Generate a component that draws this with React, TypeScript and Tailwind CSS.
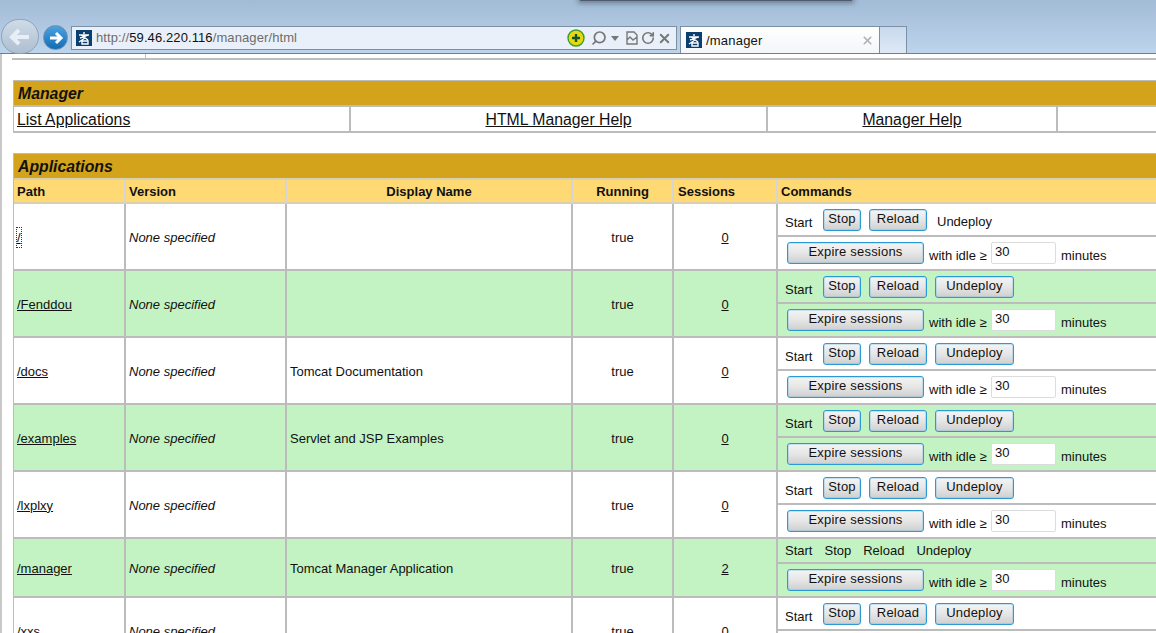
import React from 'react';
import { RotateCw, X, Search } from 'lucide-react';

interface AppRow {
  path: string;
  display: string;
  sessions: string;
  green?: boolean;
  running?: boolean;
  self?: boolean;
}

const rows: AppRow[] = [
  { path: '/', display: '', sessions: '0', running: true },
  { path: '/Fenddou', display: '', sessions: '0', green: true },
  { path: '/docs', display: 'Tomcat Documentation', sessions: '0' },
  { path: '/examples', display: 'Servlet and JSP Examples', sessions: '0', green: true },
  { path: '/lxplxy', display: '', sessions: '0' },
  { path: '/manager', display: 'Tomcat Manager Application', sessions: '2', green: true, self: true },
  { path: '/xxs', display: '', sessions: '0' },
];

const cols = 'grid grid-cols-[110px_161px_286px_101px_104px_1fr]';

function Favicon() {
  return (
    <svg width="16" height="16" viewBox="0 0 16 16" className="shrink-0">
      <rect width="16" height="16" fill="#0b3f6f" />
      <path d="M8 2v2M3 5h10M4 8l8-3M5 5l7 5M3 12l6-4M6 11h6v3H6z" stroke="#fff" strokeWidth="1.4" fill="none" />
    </svg>
  );
}

function Btn({ label, w }: { label: string; w: string }) {
  return (
    <button className={`${w} h-[22px] shrink-0 rounded-[3px] border border-[#2a9ad6] bg-gradient-to-b from-[#f4f4f4] via-[#e6e6e6] to-[#cfcfcf] pb-[3px] text-center text-[13px] leading-[18px] tracking-[0.2px] text-[#111] shadow-[inset_0_0_0_1px_rgba(120,190,230,0.35)]`}>
      {label}
    </button>
  );
}

function Commands({ row }: { row: AppRow }) {
  return (
    <div className="flex flex-col">
      {row.self ? (
        <div className="flex h-[23px] items-center gap-[12px] pl-[7px] pt-px">
          <span>Start</span>
          <span>Stop</span>
          <span>Reload</span>
          <span>Undeploy</span>
        </div>
      ) : (
        <div className="flex h-[31px] items-start pl-[7px] pt-[5px]">
          <span className="mt-[4px] w-[38px]">Start</span>
          <Btn label="Stop" w="w-[38px]" />
          <div className="ml-[8px]">
            <Btn label="Reload" w="w-[58px]" />
          </div>
          {row.running ? (
            <span className="ml-[10px] mt-[3px]">Undeploy</span>
          ) : (
            <div className="ml-[8px]">
              <Btn label="Undeploy" w="w-[79px]" />
            </div>
          )}
        </div>
      )}
      <div className="flex h-[34px] items-start border-t-2 border-[#bcbcbc] pl-[9px] pt-[5px]">
        <Btn label="Expire sessions" w="w-[137px]" />
        <span className="ml-[5px] mt-[4px] w-[62px] whitespace-nowrap">with idle ≥</span>
        <div className="h-[22px] w-[65px] rounded-[2px] border border-[#dcdcdc] bg-white pl-[3px] text-[13px] leading-[18px]">30</div>
        <span className="ml-[5px] mt-[4px]">minutes</span>
      </div>
    </div>
  );
}

export default function App() {
  return (
    <div className="h-[633px] w-[1156px] overflow-hidden bg-white font-['Liberation_Sans',Arial,sans-serif] text-[13px] text-[#111]">
      <div className="relative h-[54px] border-b border-[#6f7f90] bg-gradient-to-b from-[#a2bbd6] to-[#bdd4ec]">
        <div className="absolute left-[580px] top-0 h-[1px] w-[272px] bg-[#4f5a6b] shadow-[0_0_5px_2px_rgba(60,70,90,0.6)]" />
        <div className="absolute left-[1px] top-[19px] flex h-[35px] w-[38px] items-center justify-center rounded-full border border-[#8fa3b8] bg-gradient-to-b from-[#cfdbe8] to-[#aebfd1]">
          <svg width="24" height="20" viewBox="0 0 24 20">
            <path d="M21 10H5M11 3l-7 7 7 7" stroke="#e8eef5" strokeWidth="4" fill="none" />
          </svg>
        </div>
        <div className="absolute left-[43px] top-[25px] flex h-[25px] w-[25px] items-center justify-center rounded-full border border-[#6d8fae] bg-gradient-to-b from-[#4aa3e0] to-[#0f6db5]">
          <svg width="16" height="14" viewBox="0 0 16 14">
            <path d="M2 7h11M8 2l5 5-5 5" stroke="#fff" strokeWidth="3" fill="none" />
          </svg>
        </div>
        <div className="absolute left-[71px] top-[26px] flex h-[24px] w-[606px] items-center border border-[#7d8fa3] bg-[#e9f0f9] pl-[4px] pr-[4px]">
          <Favicon />
          <span className="ml-[4px] text-[13px] tracking-[0.1px] text-[#6d6d6d]">
            http://<span className="text-[#111]">59.46.220.116</span>/manager/html
          </span>
          <div className="ml-auto flex items-center">
            <svg width="18" height="18" viewBox="0 0 18 18">
              <circle cx="9" cy="9" r="8" fill="#e6d90f" stroke="#3f9b2b" strokeWidth="1.4" />
              <path d="M9 5v8M5 9h8" stroke="#14532d" strokeWidth="2.4" />
            </svg>
            <Search size={16} strokeWidth={2.6} className="ml-[6px] -scale-x-100 text-[#777]" />
            <svg width="8" height="5" viewBox="0 0 8 5" className="ml-[4px]">
              <path d="M0 0h8L4 5z" fill="#777" />
            </svg>
            <svg width="12" height="14" viewBox="0 0 12 14" className="ml-[7px]">
              <path d="M1 1h7l3 3v9H1zM1 9l3-3 3 3 4-3" stroke="#777" strokeWidth="1.4" fill="none" />
            </svg>
            <RotateCw size={14} strokeWidth={2.8} className="ml-[3px] text-[#777]" />
            <X size={15} strokeWidth={3} className="ml-[2px] text-[#777]" />
          </div>
        </div>
        <div className="absolute left-[680px] top-[26px] flex h-[27px] w-[200px] items-center border border-b-0 border-[#7d8fa3] bg-gradient-to-b from-white to-[#f3f6fa] pl-[5px] pr-[5px]">
          <Favicon />
          <span className="ml-[4px] mt-[2px] text-[13px] tracking-[0.2px] text-[#111]">/manager</span>
          <X size={13} strokeWidth={3} className="ml-auto text-[#aab0b6]" />
        </div>
        <div className="absolute left-[880px] top-[26px] h-[27px] w-[27px] border border-b-0 border-l-0 border-[#7d8fa3] bg-gradient-to-b from-[#c7d9ee] to-[#dfe9f5]" />
      </div>

      <div className="h-[579px] overflow-hidden border-l-2 border-[#c8c8c8]">
        <div className="ml-[10px] flex h-[6px] border-b-2 border-[#bdbdbd]">
          <div className="h-full w-[134px] border-r border-[#bdbdbd]" />
        </div>

        <div className="ml-[11px] mt-[20px] border-l border-t border-[#bcbcbc]">
          <div className="h-[24px] bg-[#d2a31b] pl-[4px] text-[15.8px] font-bold italic leading-[25px]">Manager</div>
          <div className="grid h-[28px] grid-cols-[335px_417px_290px_1fr] border-y-2 border-[#bcbcbc] text-[15.8px] leading-[25px]">
            <div className="pl-[3px]"><a className="underline">List Applications</a></div>
            <div className="border-l-2 border-[#bcbcbc] text-center"><a className="underline">HTML Manager Help</a></div>
            <div className="border-l-2 border-[#bcbcbc] text-center"><a className="underline">Manager Help</a></div>
            <div className="border-l-2 border-[#bcbcbc]" />
          </div>
        </div>

        <div className="ml-[11px] mt-[20px] border-l border-t border-[#bcbcbc]">
          <div className="h-[24px] bg-[#d2a31b] pl-[4px] text-[15.8px] font-bold italic leading-[25px]">Applications</div>
          <div className={`${cols} h-[26px] border-y-2 border-[#d8d0b0] bg-[#ffd974] font-bold leading-[23px]`}>
            <div className="pl-[3px]">Path</div>
            <div className="border-l-2 border-[#d5d5d5] pl-[3px]">Version</div>
            <div className="border-l-2 border-[#d5d5d5] text-center">Display Name</div>
            <div className="border-l-2 border-[#d5d5d5] text-center">Running</div>
            <div className="border-l-2 border-[#d5d5d5] pl-[4px]">Sessions</div>
            <div className="border-l-2 border-[#d5d5d5] pl-[3px]">Commands</div>
          </div>
          {rows.map((row) => (
            <div key={row.path} className={`${cols} border-b-2 border-[#bcbcbc] ${row.green ? 'bg-[#c3f3c3]' : 'bg-white'}`}>
              <div className="flex items-center pl-[3px] pt-[2px]">
                <a className={row.path === '/' ? 'underline outline outline-1 outline-dotted outline-[#333]' : 'underline'}>{row.path}</a>
              </div>
              <div className="flex items-center border-l-2 border-[#bcbcbc] pl-[3px] pt-[2px] italic">None specified</div>
              <div className="flex items-center border-l-2 border-[#bcbcbc] pl-[3px] pt-[2px]">{row.display}</div>
              <div className="flex items-center justify-center border-l-2 border-[#bcbcbc] pt-[2px]">true</div>
              <div className="flex items-center justify-center border-l-2 border-[#bcbcbc] pt-[2px]"><a className="underline">{row.sessions}</a></div>
              <div className="border-l-2 border-[#bcbcbc]"><Commands row={row} /></div>
            </div>
          ))}
        </div>
      </div>
    </div>
  );
}
